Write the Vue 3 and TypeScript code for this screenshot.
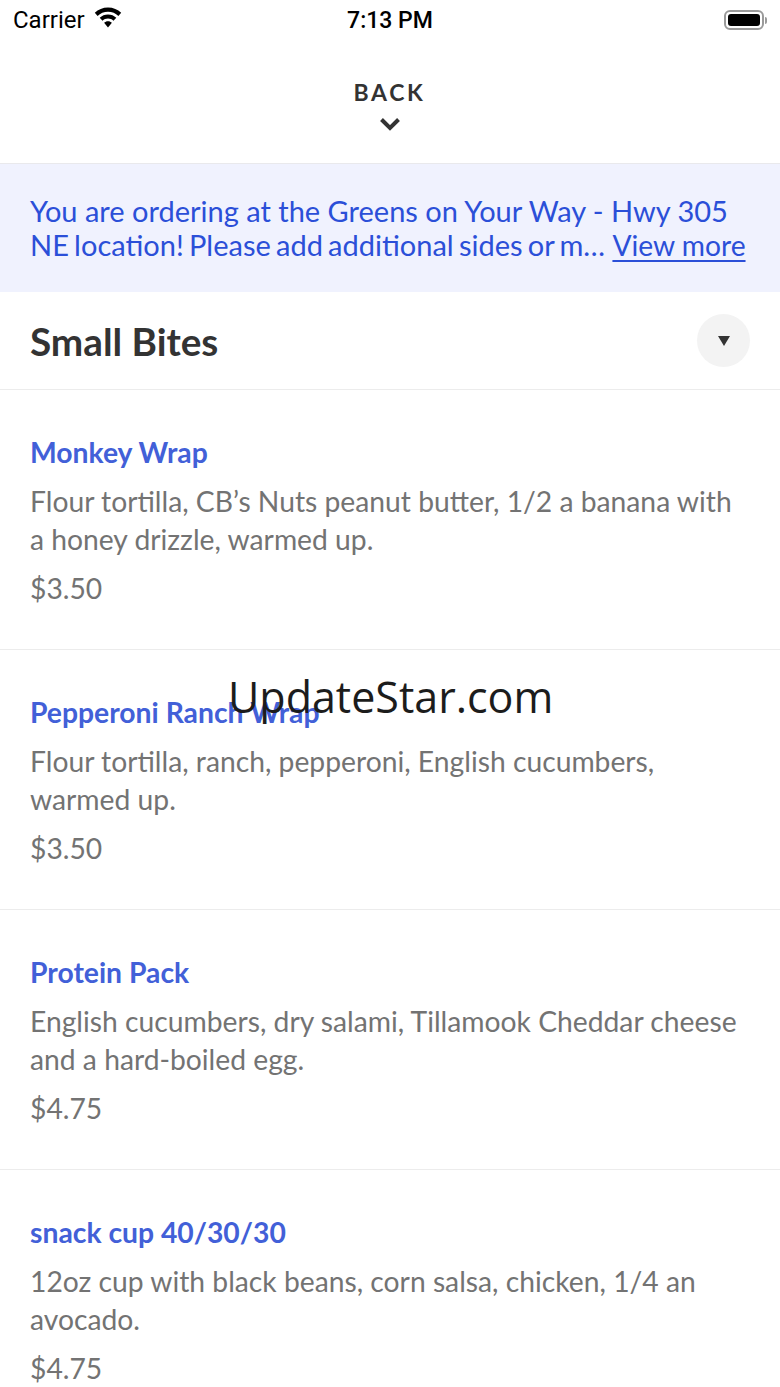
<script setup lang="ts">
interface Item { name: string; desc: string; price: string }
const items: Item[] = [
  { name: 'Monkey Wrap', desc: 'Flour tortilla, CB’s Nuts peanut butter, 1/2 a banana with a honey drizzle, warmed up.', price: '$3.50' },
  { name: 'Pepperoni Ranch Wrap', desc: 'Flour tortilla, ranch, pepperoni, English cucumbers, warmed up.', price: '$3.50' },
  { name: 'Protein Pack', desc: 'English cucumbers, dry salami, Tillamook Cheddar cheese and a hard-boiled egg.', price: '$4.75' },
  { name: 'snack cup 40/30/30', desc: '12oz cup with black beans, corn salsa, chicken, 1/4 an avocado.', price: '$4.75' },
]
</script>

<template>
  <div class="screen">
    <div class="status">
      <div class="status-left">
        <span>Carrier</span>
        <svg class="wifi" width="28" height="21" viewBox="0 0 28 21">
          <path d="M14 0.5C8.8 0.5 4.2 2.5 0.8 5.8L3.6 8.9C6.3 6.3 10 4.7 14 4.7s7.7 1.6 10.4 4.2l2.8-3.1C23.8 2.5 19.2 0.5 14 0.5Z" fill="#000"/>
          <path d="M14 7.4c-3.2 0-6.1 1.2-8.3 3.3l2.8 3.1c1.4-1.4 3.4-2.2 5.5-2.2s4.1.8 5.500 2.2l2.8-3.1C20.1 8.6 17.2 7.4 14 7.4Z" fill="#000"/>
          <path d="M14 14.2c-1.500 0-2.900.6-3.900 1.500L14 20.500l3.900-4.800c-1-.9-2.400-1.500-3.900-1.500Z" fill="#000"/>
        </svg>
      </div>
      <div class="time">7:13 PM</div>
      <div class="battery">
        <div class="battery-body"><div class="battery-fill"></div></div>
        <div class="battery-cap"></div>
      </div>
    </div>

    <header class="back">
      <div class="back-label">BACK</div>
      <svg width="22" height="15" viewBox="0 0 22 15">
        <path d="M2.500 2.500 11 11l8.500-8.500" fill="none" stroke="#333" stroke-width="4"/>
      </svg>
    </header>

    <section class="banner">
      <p>You are ordering at the Greens on Your Way - Hwy 305 <span class="tight">NE location! Please add additional sides or m…</span> <span class="more">View more</span></p>
    </section>

    <section class="section-head">
      <h2>Small Bites</h2>
      <div class="toggle"><span class="triangle"></span></div>
    </section>

    <article v-for="item in items" :key="item.name" class="item">
      <h3>{{ item.name }}</h3>
      <p class="desc">{{ item.desc }}</p>
      <p class="price">{{ item.price }}</p>
    </article>

    <div class="watermark">UpdateStar.com</div>
  </div>
</template>

<style>
html, body { margin: 0; background: #fff; }
</style>

<style scoped>
.screen {
  position: relative;
  width: 780px;
  height: 1387px;
  overflow: hidden;
  background: #fff;
  font-family: Lato, "Open Sans", sans-serif;
}
.status {
  height: 40px;
  display: grid;
  grid-template-columns: 1fr auto 1fr;
  align-items: center;
  padding: 0 13px;
  color: #000;
  font-family: Roboto, "Liberation Sans", sans-serif;
  font-size: 24px;
}
.status-left { display: flex; align-items: center; gap: 9px; }
.wifi { margin-top: -5px; }
.time { font-weight: 500; font-size: 23px; }
.battery { justify-self: end; display: flex; align-items: center; }
.battery-body {
  width: 40px;
  height: 20px;
  box-sizing: border-box;
  border: 2px solid #9a9a9a;
  border-radius: 6px;
  padding: 2px;
}
.battery-fill { width: 100%; height: 100%; background: #000; border-radius: 3px; }
.battery-cap { width: 2px; height: 7px; background: #9a9a9a; border-radius: 0 2px 2px 0; margin-left: 1px; }
.back {
  height: 124px;
  box-sizing: border-box;
  border-bottom: 1px solid #e9e9ec;
  padding: 39px 1px 0 0;
  display: flex;
  flex-direction: column;
  align-items: center;
  gap: 11px;
}
.back-label {
  font-size: 23px;
  line-height: 27px;
  font-weight: 700;
  letter-spacing: 2.700px;
  color: #333;
}
.banner {
  height: 128px;
  box-sizing: border-box;
  background: #f0f2fe;
  padding: 30px 30px 0;
}
.banner p {
  margin: 0;
  font-size: 29px;
  line-height: 34px;
  color: #2b4fd8;
}
.tight { word-spacing: -2.200px; }
.more {
  font-size: 28.200px;
  text-decoration: underline;
  text-underline-offset: 4px;
  text-decoration-thickness: 2px;
}
.section-head {
  height: 98px;
  box-sizing: border-box;
  border-bottom: 1px solid #ececec;
  display: flex;
  align-items: center;
  justify-content: space-between;
  padding: 0 30px;
}
.section-head h2 {
  margin: 0;
  font-size: 38.700px;
  font-weight: 700;
  color: #333;
}
.toggle {
  width: 53px;
  height: 53px;
  border-radius: 50%;
  background: #f3f3f3;
  display: flex;
  align-items: center;
  justify-content: center;
}
.triangle {
  width: 0;
  height: 0;
  border-left: 6.500px solid transparent;
  border-right: 6.500px solid transparent;
  border-top: 10px solid #333;
}
.item {
  height: 260px;
  box-sizing: border-box;
  border-bottom: 1px solid #ececec;
  padding: 44px 35px 0 30px;
}
.item h3 {
  margin: 0;
  font-size: 28.300px;
  line-height: 36px;
  font-weight: 700;
  color: #4260d8;
}
.desc {
  margin: 12px 0 0;
  font-size: 28.250px;
  line-height: 38px;
  color: #737373;
}
.price {
  margin: 11px 0 0;
  font-size: 28.250px;
  line-height: 38px;
  color: #737373;
}
.watermark {
  position: absolute;
  left: 228px;
  top: 668px;
  font-family: "Open Sans", sans-serif;
  font-size: 43px;
  line-height: 58px;
  color: #1c1c1c;
  white-space: nowrap;
}
</style>
